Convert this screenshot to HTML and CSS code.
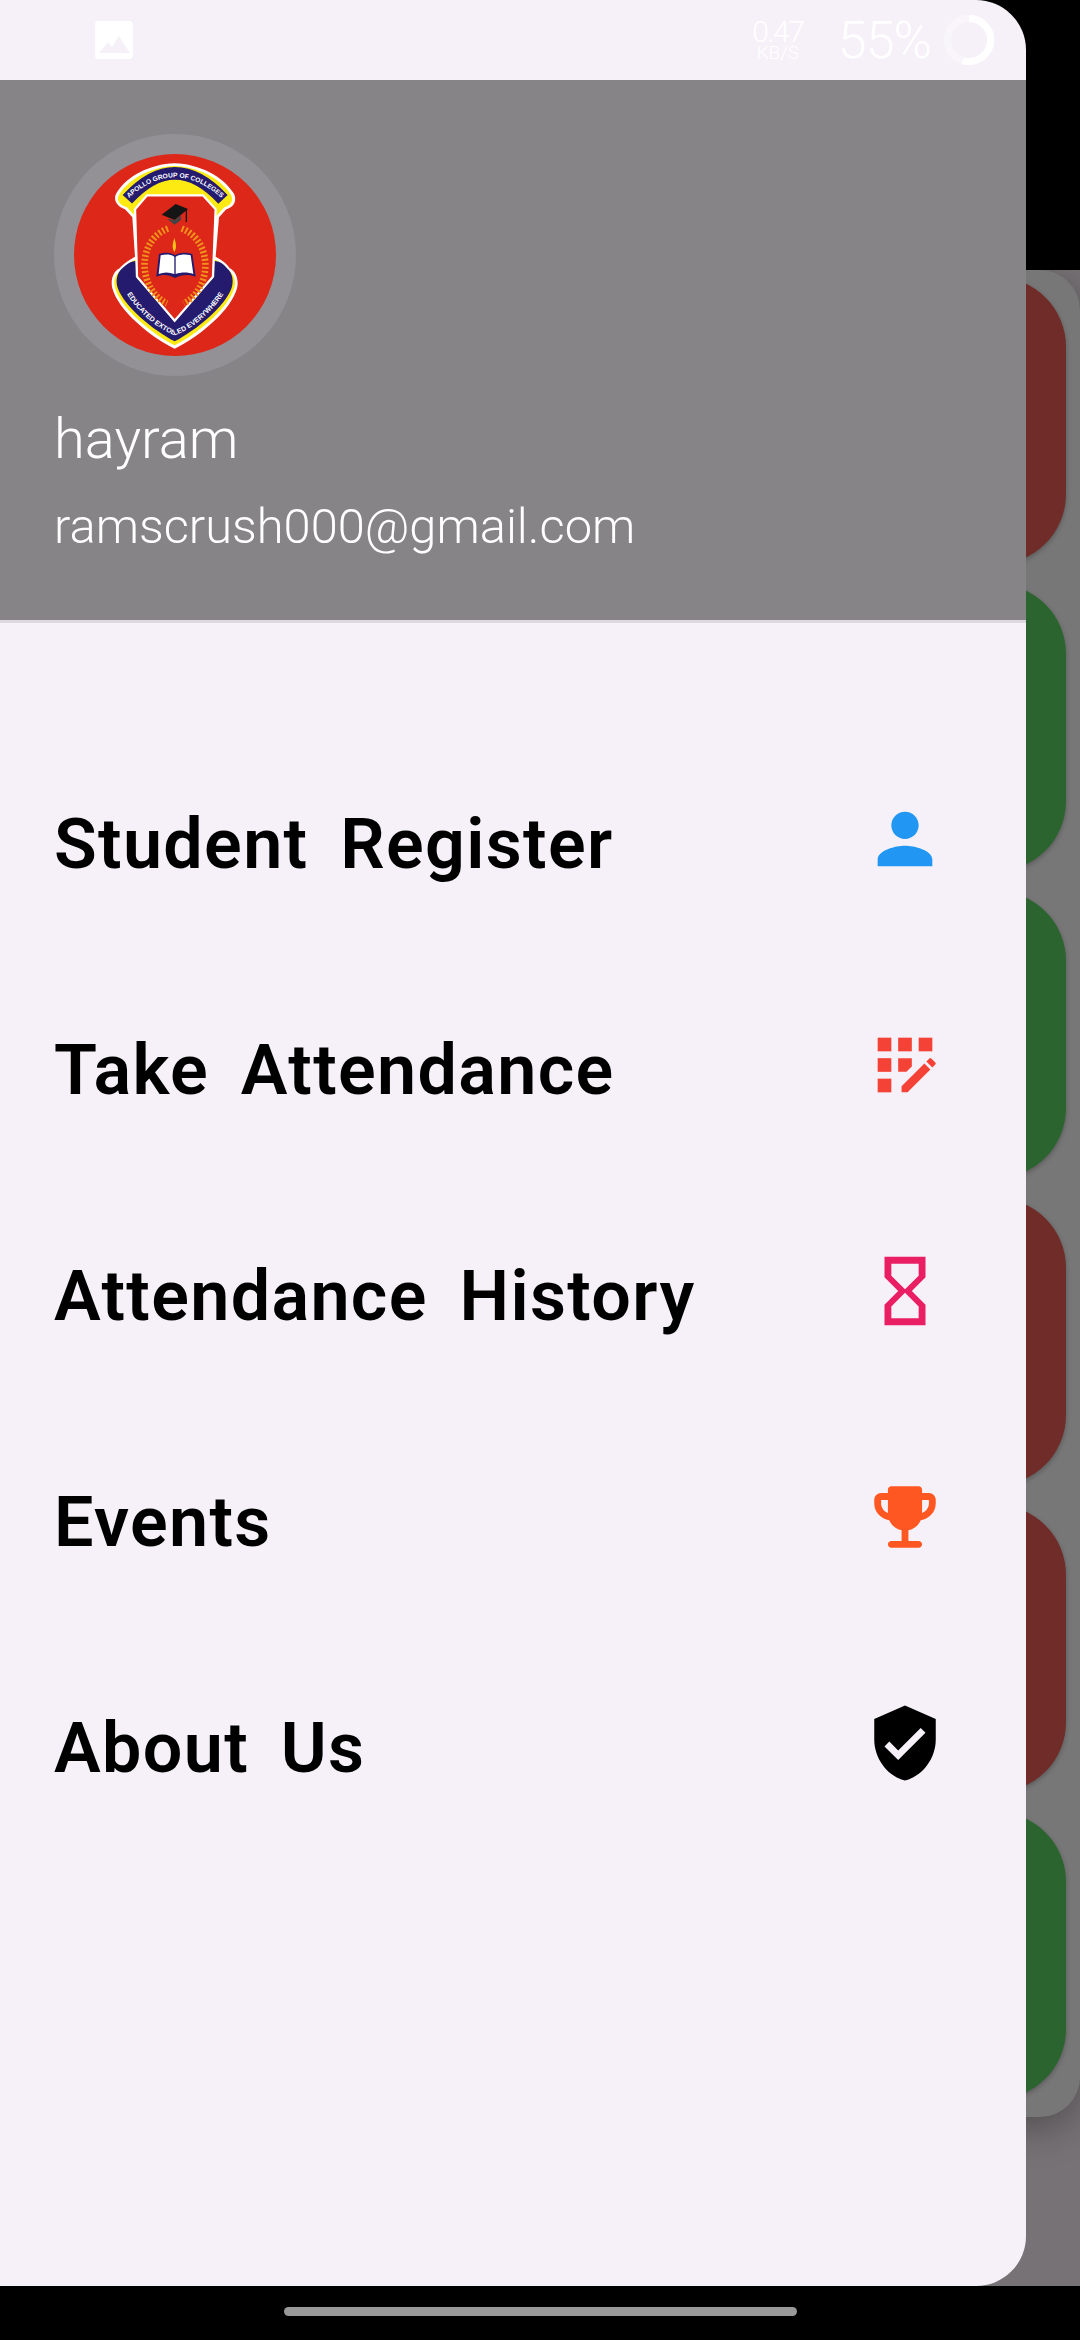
FILE: index.html
```html
<!DOCTYPE html>
<html lang="en">
<head>
<meta charset="utf-8">
<title>Drawer</title>
<link rel="stylesheet" href="styles.css">
</head>
<body>
<div class="screen">
  <div class="backdrop">
    <div class="top-gap"></div>
    <div class="scrim">
      <div class="panel">
        <div class="card red"></div>
        <div class="card green"></div>
        <div class="card green"></div>
        <div class="card red"></div>
        <div class="card red"></div>
        <div class="card green"></div>
      </div>
    </div>
    <div class="nav-bar"><div class="home-pill"></div></div>
  </div>

  <aside class="drawer">
    <div class="status">
      <svg class="pic-icon" viewBox="0 0 38 38"><rect width="38" height="38" rx="4" fill="#fff"/><path d="M4 32 L13 21 L17 26 L24 15 L35 32 Z" fill="#f6f1f8"/></svg>
      <div class="status-right">
        <div class="speed"><span class="speed-num">0.47</span><span class="speed-unit">KB/S</span></div>
        <span class="battery">55%</span>
        <svg class="ring" viewBox="0 0 50 50"><circle cx="25" cy="25" r="21.5" fill="none" stroke="#f9f6fb" stroke-width="7"/><path d="M25 3.5 A21.5 21.5 0 1 1 19 45.6" fill="none" stroke="#fff" stroke-width="7"/></svg>
      </div>
    </div>
    <header class="header">
      <svg class="avatar" viewBox="-17 -18 726 726">
        <defs>
          <path id="arcTop" d="M203 178 Q345 22 490 178"/>
          <path id="arcTopText" d="M185 196 Q345 28 508 196"/>
          <path id="arcBot" d="M186 428 C212 500 290 566 345 586 C400 566 482 500 508 428"/>
        </defs>
        <circle cx="346" cy="345" r="363" fill="#939196"/>
        <circle cx="346" cy="345" r="303" fill="#dc2719"/>
        <path d="M345 70 C420 72 490 110 522 160 C532 178 526 200 500 208 L478 232 L468 350 C490 362 505 375 510 385 C530 395 538 420 532 445 C515 510 420 590 345 626 C270 590 175 510 158 445 C152 420 160 395 180 385 C187 375 205 362 226 350 L218 232 L196 208 C170 200 160 178 170 160 C200 110 270 72 345 70 Z" fill="#fff"/>
        <path d="M345 78 C415 80 484 116 514 164 C522 180 516 196 494 202 L470 228 L460 356 C484 366 498 380 503 390 C522 400 530 420 524 443 C507 504 415 580 345 616 C275 580 183 504 166 443 C160 420 168 400 187 390 C194 380 208 366 234 356 L226 228 L202 202 C178 196 170 180 178 164 C208 116 276 80 345 78 Z" fill="#fdea13"/>
        <path d="M188 385 C205 368 215 365 228 362 L232 415 L345 535 L460 415 L464 362 C478 365 490 368 502 385 C520 400 522 425 516 443 C498 498 410 570 345 604 C280 570 192 498 174 443 C168 425 170 400 188 385 Z" fill="#241a6e"/>
        <use href="#arcTop" fill="none" stroke="#241a6e" stroke-width="38"/>
        <path d="M262 166 L430 166 L468 208 L460 410 L345 542 L232 410 L226 208 Z" fill="#dc2719" stroke="#fff" stroke-width="7"/>
        <text class="logo-top"><textPath href="#arcTopText" startOffset="50%" text-anchor="middle">APOLLO GROUP OF COLLEGES</textPath></text>
        <text class="logo-bot"><textPath href="#arcBot" startOffset="50%" text-anchor="middle">EDUCATED EXTOLLED EVERYWHERE</textPath></text>
        <path d="M306 224 L348 192 L385 207 L345 240 Z" fill="#151515"/>
        <path d="M322 236 L345 254 L364 240 L364 226 L345 240 Z" fill="#444"/>
        <path d="M380 208 L380 246" stroke="#151515" stroke-width="4"/>
        <path d="M325 266 C270 285 240 350 262 420 C275 455 295 478 322 490" fill="none" stroke="#f0921c" stroke-width="20" stroke-dasharray="6 6"/>
        <path d="M366 266 C420 285 452 350 430 420 C417 455 397 478 372 490" fill="none" stroke="#f0921c" stroke-width="20" stroke-dasharray="6 6"/>
        <path d="M344 294 C338 312 337 325 344 336 C351 325 350 312 344 294 Z" fill="#fcc21b"/>
        <path d="M290 410 L298 342 C320 336 335 338 346 346 C358 338 375 336 398 342 L408 410 C385 402 365 404 346 414 C328 404 310 402 290 410 Z" fill="#241a6e"/>
        <path d="M297 402 L303 346 C322 341 335 344 344 350 L344 402 C328 396 312 396 297 402 Z M401 402 L393 346 C375 341 358 344 348 350 L348 402 C365 396 385 396 401 402 Z" fill="#fff"/>
      </svg>
      <div class="name">hayram</div>
      <div class="email">ramscrush000@gmail.com</div>
    </header>
    <div class="header-line"></div>
    <nav class="menu">
      <div class="row">
        <span class="label">Student Register</span>
        <svg class="icon blue" viewBox="0 0 24 24"><path d="M12 12c2.21 0 4-1.79 4-4s-1.79-4-4-4-4 1.79-4 4 1.79 4 4 4zm0 2c-2.67 0-8 1.34-8 4v2h16v-2c0-2.66-5.33-4-8-4z"/></svg>
      </div>
      <div class="row">
        <span class="label">Take Attendance</span>
        <svg class="icon tomato" viewBox="0 0 24 24"><rect x="10" y="4" width="4" height="4"/><rect x="4" y="16" width="4" height="4"/><rect x="4" y="10" width="4" height="4"/><rect x="4" y="4" width="4" height="4"/><polygon points="14,12.42 14,10 10,10 10,14 12.42,14"/><path d="M20.88,11.29l-1.17-1.17c-0.16-0.16-0.42-0.16-0.58,0L18.25,11L20,12.75l0.88-0.88C21.04,11.71,21.04,11.45,20.88,11.29z"/><polygon points="11,18.25 11,20 12.75,20 19.42,13.33 17.67,11.58"/><rect x="16" y="4" width="4" height="4"/></svg>
      </div>
      <div class="row">
        <span class="label">Attendance History</span>
        <svg class="icon pink" viewBox="0 0 24 24"><path d="M6 2v6h.01L6 8.01 10 12l-4 4 .01.01H6V22h12v-5.99h-.01L18 16l-4-4 4-3.99-.01-.01H18V2H6zm10 14.5V20H8v-3.5l4-4 4 4zm-4-5l-4-4V4h8v3.5l-4 4z"/></svg>
      </div>
      <div class="row">
        <span class="label">Events</span>
        <svg class="icon orange" viewBox="0 0 24 24"><path d="M19 5h-2V4c0-.55-.45-1-1-1H8c-.55 0-1 .45-1 1v1H5c-1.1 0-2 .9-2 2v1c0 2.55 1.92 4.63 4.39 4.94.63 1.5 1.98 2.63 3.61 2.96V19H8c-.55 0-1 .45-1 1s.45 1 1 1h8c.55 0 1-.45 1-1s-.45-1-1-1h-3v-3.1c1.63-.33 2.98-1.46 3.61-2.96C19.08 12.63 21 10.55 21 8V7c0-1.1-.9-2-2-2zM5 8V7h2v3.82C5.84 10.4 5 9.3 5 8zm14 0c0 1.3-.84 2.4-2 2.82V7h2v1z"/></svg>
      </div>
      <div class="row">
        <span class="label">About Us</span>
        <svg class="icon dark" viewBox="0 0 24 24"><path d="M12 1L3 5v6c0 5.55 3.84 10.74 9 12 5.16-1.26 9-6.45 9-12V5l-9-4zm-2 16l-4-4 1.41-1.41L10 14.17l6.59-6.59L18 9l-8 8z"/></svg>
      </div>
    </nav>
  </aside>
</div>
</body>
</html>
```
FILE: styles.css
```css
* { box-sizing: border-box; }
html, body { margin: 0; padding: 0; background: #000; }
.screen { position: relative; width: 1080px; height: 2340px; overflow: hidden; font-family: Roboto, "Liberation Sans", sans-serif; }

.backdrop { display: flex; flex-direction: column; height: 100%; }
.top-gap { height: 270px; background: #000; }
.scrim { height: 2016px; background: #767275; }
.panel { display: flex; flex-direction: column; gap: 20px; width: 1080px; height: 1847px; padding-top: 7px; background: #777; border-radius: 0 40px 40px 0; box-shadow: 0 10px 40px rgba(0,0,0,.32); }
.card { width: 1066px; height: 287px; border-radius: 0 70px 70px 0; box-shadow: 0 2px 5px rgba(0,0,0,.25); }
.red { background: #702c28; }
.green { background: #2b642f; }
.nav-bar { display: flex; align-items: center; justify-content: center; height: 54px; background: #000; padding-bottom: 3px; }
.home-pill { width: 513px; height: 9px; border-radius: 5px; background: #999; }

.drawer { position: absolute; left: 0; top: 0; width: 1026px; height: 2286px; display: flex; flex-direction: column; background: #f6f1f8; border-radius: 0 50px 50px 0; overflow: hidden; }

.status { display: flex; align-items: center; justify-content: space-between; height: 80px; flex: none; padding: 0 32px 0 95px; }
.pic-icon { width: 38px; height: 38px; }
.status-right { display: flex; align-items: center; color: #fff; }
.speed { display: flex; flex-direction: column; align-items: center; width: 52px; margin-right: 34px; }
.speed-num { font-size: 30px; line-height: 25px; font-weight: 300; letter-spacing: -1.5px; }
.speed-unit { font-size: 19px; line-height: 17px; font-weight: 300; }
.battery { font-size: 52px; font-weight: 300; letter-spacing: -1px; margin-right: 13px; }
.ring { width: 50px; height: 50px; }

.header { display: flex; flex-direction: column; align-items: flex-start; height: 540px; flex: none; padding: 54px 0 0 54px; background: #868487; color: #fff; }
.avatar { width: 242px; height: 242px; flex: none; }
.logo-top { font-family: "Liberation Sans", sans-serif; font-size: 20px; font-weight: 700; fill: #fff; }
.logo-bot { font-family: "Liberation Sans", sans-serif; font-size: 21px; font-weight: 700; fill: #fff; }
.name { margin-top: 31px; font-size: 56px; line-height: 64px; font-weight: 300; }
.email { margin-top: 28px; font-size: 48.8px; line-height: 56px; font-weight: 300; }
.header-line { height: 3px; flex: none; background: #dcd8e0; }

.menu { display: flex; flex-direction: column; padding: 103px 80px 0 54px; }
.row { display: flex; align-items: center; justify-content: space-between; height: 226px; }
.label { margin-top: 9px; font-size: 70px; font-weight: 600; letter-spacing: 1.35px; color: #000; word-spacing: 13px; }
.icon { width: 82px; height: 82px; flex: none; }
.blue { fill: #2196f3; }
.tomato { fill: #f44336; }
.pink { fill: #e91e63; }
.orange { fill: #ff5722; }
.dark { fill: #000; }
```
